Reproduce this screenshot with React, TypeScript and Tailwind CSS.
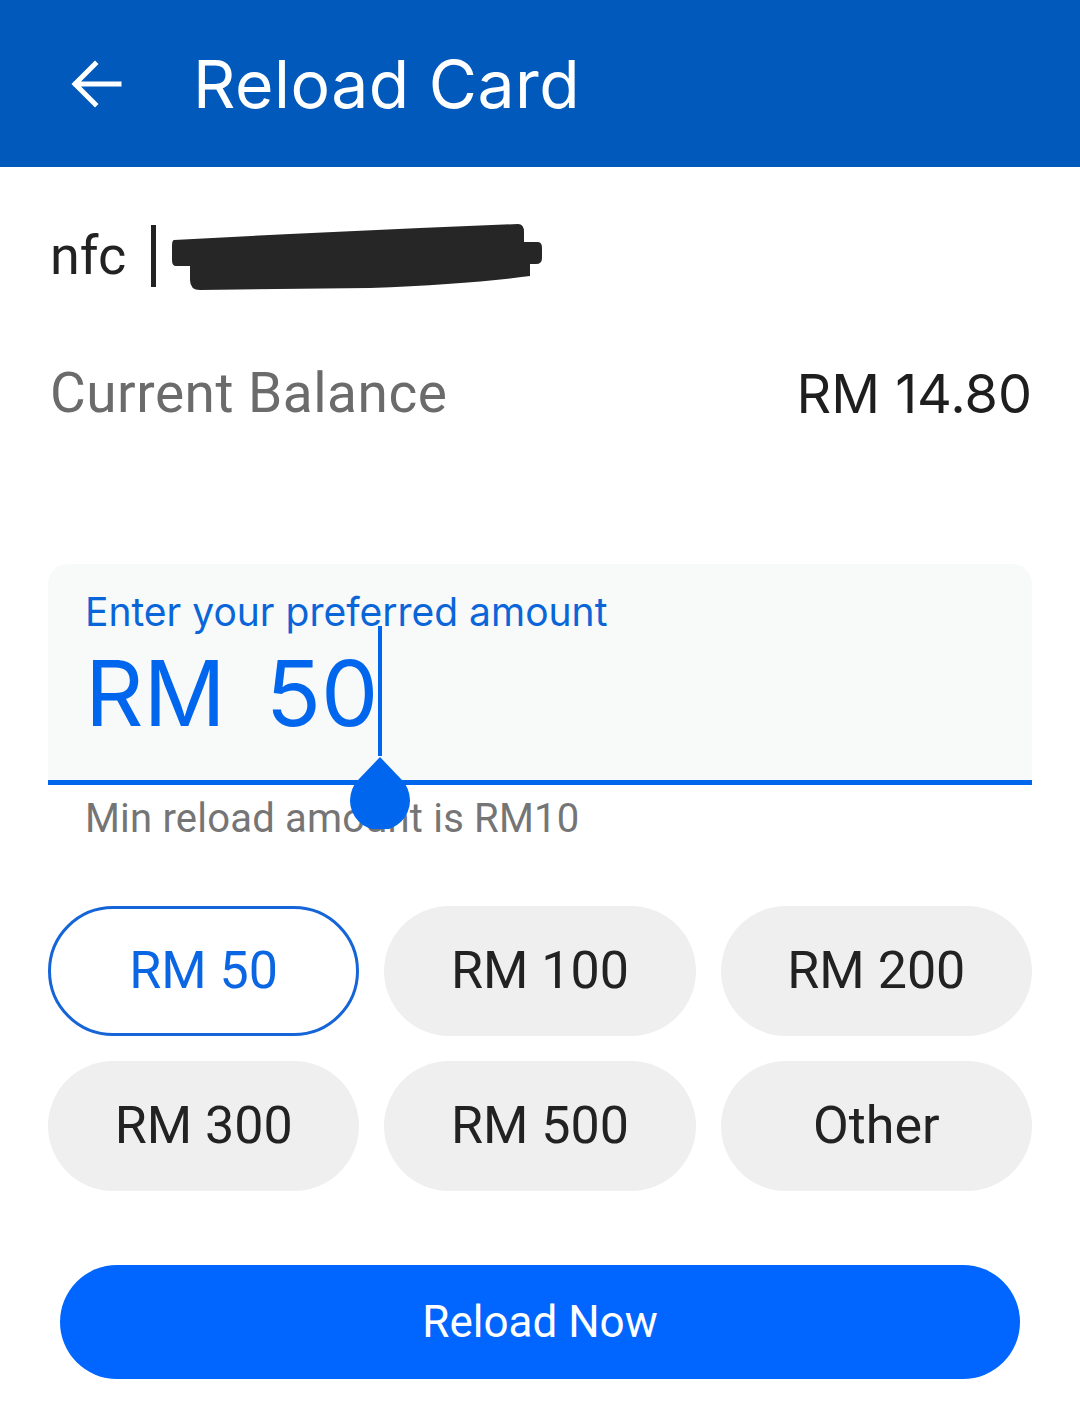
const amounts = ["RM 50", "RM 100", "RM 200", "RM 300", "RM 500", "Other"];

function Redacted() {
  return (
    <svg width="375" height="76" viewBox="0 0 375 76" className="shrink-0 ml-[14px]">
      <path
        d="M4 22 L120 16 L250 10 L348 6 Q354 6 354 14 L354 24 L368 24 Q372 24 372 30 L372 40 Q372 46 366 46 L360 46 L360 58 Q300 66 200 70 L30 72 Q20 72 20 62 L20 48 L6 48 Q2 48 2 42 L2 28 Q2 22 4 22 Z"
        fill="#262626"
      />
    </svg>
  );
}

export default function App() {
  return (
    <div className="w-[1080px] h-[1417px] bg-white font-['Roboto',sans-serif] overflow-hidden">
      {/* Header */}
      <div className="h-[167px] bg-[#0059bb] flex items-center pl-[70px]">
        <svg width="52" height="50" viewBox="0 0 52 50" fill="none" stroke="white" strokeWidth="5" strokeLinecap="square">
          <path d="M49 25 H6 M25 5 L5 25 L25 45" />
        </svg>
        <h1 className="ml-[71px] text-[66px] text-white font-['Inter',sans-serif] tracking-[0.5px] leading-none">
          Reload Card
        </h1>
      </div>

      <div className="px-[48px]">
        {/* Card number */}
        <div className="flex items-center h-[62px] mt-[58px]">
          <span className="text-[54px] text-[#222] ml-[2px] leading-none">nfc</span>
          <div className="w-[5px] h-[62px] bg-[#222] ml-[25px]" />
          <Redacted />
        </div>

        {/* Balance */}
        <div className="flex justify-between items-center mt-[65px]">
          <span className="text-[55px] text-[#6b6b6b] ml-[2px] tracking-[0.5px]">Current Balance</span>
          <span className="text-[54px] text-[#1e1e1e] font-['Inter',sans-serif]">RM 14.80</span>
        </div>

        {/* Input */}
        <div className="mt-[129px] relative">
          <div className="bg-[#f8f9f9] rounded-t-[20px] h-[221px] pl-[37px] pt-[22px] border-b-[5px] border-[#0066ee]">
            <div className="text-[39px] text-[#0a66d8] font-['Inter',sans-serif] leading-[52px]">
              Enter your preferred amount
            </div>
            <div className="text-[91px] text-[#0066ee] font-['Inter',sans-serif] leading-[110px] flex items-center">
              <span>RM</span>
              <span className="ml-[40px]">50</span>
            </div>
          </div>
          {/* Cursor and handle */}
          <div className="absolute left-[330px] top-[62px] w-[4px] h-[130px] bg-[#0066ee]" />
          <svg className="absolute left-[301px] top-[193px]" width="62" height="72" viewBox="0 0 62 72">
            <path d="M31 0 L52 22 A30 30 0 1 1 10 22 Z" fill="#0066ee" />
          </svg>
          <div className="text-[40px] text-[#757575] pl-[37px] mt-[10px] leading-[48px] tracking-[0.2px]">
            Min reload amount is RM10
          </div>
        </div>

        {/* Chips */}
        <div className="grid grid-cols-3 gap-x-[25px] gap-y-[25px] mt-[63px]">
          {amounts.map((a, i) => (
            <div
              key={a}
              className={
                i === 0
                  ? "h-[130px] rounded-full border-[3px] border-[#1565d8] bg-white text-[#0b66e4] flex items-center justify-center text-[52px]"
                  : "h-[130px] rounded-full bg-[#efefef] text-[#222] flex items-center justify-center text-[52px]"
              }
            >
              {a}
            </div>
          ))}
        </div>

        {/* Reload button */}
        <div className="mx-[12px] mt-[74px] h-[114px] rounded-full bg-[#0066ff] flex items-center justify-center">
          <span className="text-white text-[44px]">Reload Now</span>
        </div>
      </div>
    </div>
  );
}
